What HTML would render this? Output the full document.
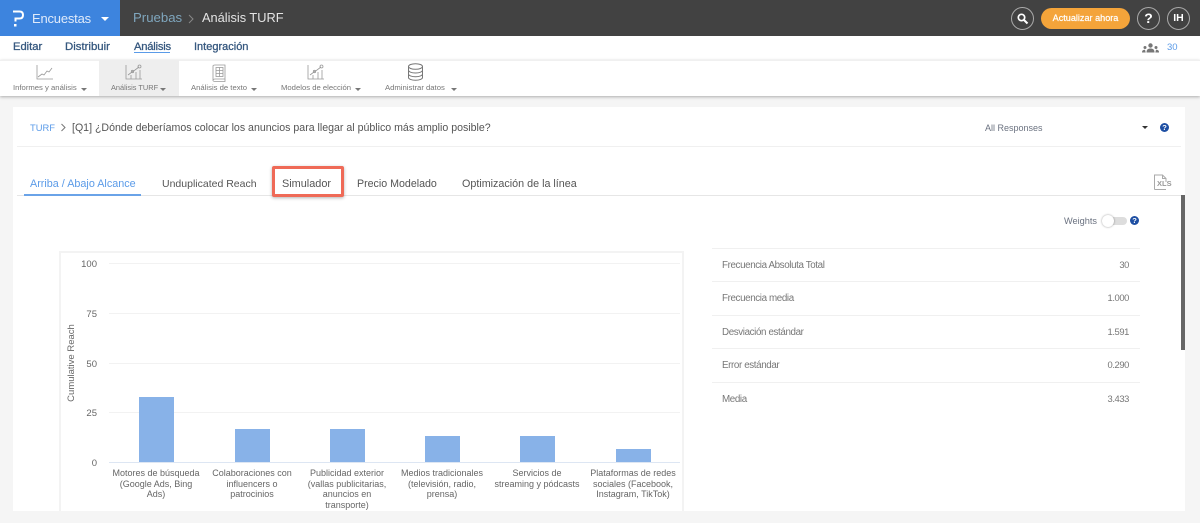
<!DOCTYPE html>
<html lang="es"><head><meta charset="utf-8"><title>Análisis TURF</title>
<style>
html,body{margin:0;padding:0;width:1200px;height:523px;overflow:hidden;background:#f5f5f5;font-family:"Liberation Sans",sans-serif}
.a{position:absolute}
.t{position:absolute;white-space:nowrap;line-height:14px}
.c{position:absolute;text-align:center;font-size:9px;line-height:10.7px;color:#666;width:130px}
.arr{position:absolute;width:0;height:0;border-left:3.5px solid transparent;border-right:3.5px solid transparent;border-top:3.5px solid #777}
.hl{position:absolute;left:712px;width:428px;height:1px;background:#f0f0f0}
.g{position:absolute;left:109px;width:571px;height:1px;background:#f2f2f2}
.b{position:absolute;width:35px;background:#88b2e8}
.stat{position:absolute;font-size:9.8px;letter-spacing:-.38px;color:#777;line-height:14px;white-space:nowrap}
.v{position:absolute;right:71px;font-size:9.4px;letter-spacing:-.4px;color:#777;line-height:14px}
.y{position:absolute;font-size:9.5px;color:#666;line-height:12px;text-align:right;width:30px;left:67px}
.q{position:absolute;width:9px;height:9px;border-radius:50%;background:#1e4fa3;color:#fff;font-size:7.5px;font-weight:bold;line-height:9px;text-align:center}
.cir{position:absolute;top:7px;width:21px;height:21px;border:1px solid #aaa;border-radius:50%;color:#fff;font-weight:bold;text-align:center;line-height:21px}
.n{position:absolute;top:40px;white-space:nowrap;line-height:14px;font-size:11.2px;color:#36587f;-webkit-text-stroke:.3px #36587f}
.m{position:absolute;top:82px;white-space:nowrap;font-size:7.7px;color:#777;line-height:12px}
.tab{position:absolute;top:177px;white-space:nowrap;line-height:14px;font-size:10.65px;color:#555}
</style></head><body>
<!-- top bar -->
<div class="a" style="left:0;top:0;width:1200px;height:36px;background:#424242"></div>
<div class="a" style="left:0;top:0;width:120px;height:36px;background:#3d84de"></div>
<svg class="a" style="left:10px;top:9px" width="16" height="20" viewBox="0 0 16 20"><path d="M3 2.5H9.5C12 2.500 13 4 13 6S12 9.500 9.500 9.500H5.500V12.500" fill="none" stroke="#fff" stroke-width="2"/><rect x="4" y="15" width="2.500" height="2.500" fill="#fff"/></svg>
<div class="t" style="left:32px;top:12px;font-size:13px;letter-spacing:-.2px;color:#dfeafa">Encuestas</div>
<div class="arr" style="left:101px;top:17px;border-left-width:4.5px;border-right-width:4.500px;border-top:4.500px solid #fff"></div>
<div class="t" style="left:133px;top:11px;font-size:13.2px;color:#7fa6bd">Pruebas</div>
<svg class="a" style="left:187px;top:14px" width="8" height="10"><path d="M2 1L6 5L2 9" fill="none" stroke="#888" stroke-width="1"/></svg>
<div class="t" style="left:202px;top:11px;font-size:12.8px;color:#e4e4e4">Análisis TURF</div>
<div class="cir" style="left:1011px">
<svg class="a" style="left:4px;top:4px" width="13" height="13" viewBox="0 0 13 13"><circle cx="5.500" cy="5.500" r="3.200" fill="none" stroke="#fff" stroke-width="1.700"/><path d="M8 8L11.500 11.500" stroke="#fff" stroke-width="2"/></svg></div>
<div class="a" style="left:1041px;top:8px;width:89px;height:21px;background:#f4a43a;border-radius:11px;color:#fff;font-size:9.1px;-webkit-text-stroke:.2px #fff;line-height:21px;text-align:center">Actualizar ahora</div>
<div class="cir" style="left:1137px;font-size:14px">?</div>
<div class="cir" style="left:1167px;font-size:10.500px">IH</div>
<!-- nav -->
<div class="a" style="left:0;top:36px;width:1200px;height:24px;background:#fff"></div>
<div class="n" style="left:13px">Editar</div>
<div class="n" style="left:65px;font-size:11.4px">Distribuir</div>
<div class="n" style="left:134px;letter-spacing:-.2px">Análisis</div>
<div class="a" style="left:134px;top:52px;width:36px;height:1px;background:#5a9be8"></div>
<div class="n" style="left:194px;font-size:11px">Integración</div>
<svg class="a" style="left:1142px;top:43px" width="17" height="10" viewBox="0 0 17 10" fill="#777"><circle cx="8.500" cy="2.500" r="2.200"/><path d="M4.500 9.500C4.500 6.500 6 5.500 8.500 5.500S12.500 6.500 12.500 9.500Z"/><circle cx="3" cy="4.500" r="1.500"/><path d="M0 9.500C0 7.500 1 6.800 3 6.800L3.700 9.500Z"/><circle cx="14" cy="4.500" r="1.500"/><path d="M17 9.500C17 7.500 16 6.800 14 6.800L13.300 9.500Z"/></svg>
<div class="t" style="left:1167px;top:41px;font-size:9.500px;color:#5b9be8">30</div>
<!-- toolbar -->
<div class="a" style="left:0;top:60px;width:1200px;height:36px;background:#fff;border-top:1px solid #f0f0f0;box-sizing:border-box;box-shadow:0 1px 3px rgba(0,0,0,.3)"></div>
<div class="a" style="left:99px;top:60px;width:80px;height:36px;background:#eeeeee"></div>
<svg class="a" style="left:36px;top:64px" width="18" height="16" viewBox="0 0 18 16" fill="none" stroke="#999" stroke-width=".8"><path d="M1 1V15H17"/><path d="M2 13L6 10L8 11L11 7L13 8L16 4"/></svg>
<svg class="a" style="left:125px;top:64px" width="18" height="16" viewBox="0 0 18 16" fill="none" stroke="#999" stroke-width=".8"><path d="M1 1V15H17"/><path d="M3 11L7 8L10 6L14 3"/><circle cx="14.500" cy="2.500" r="1.500"/><circle cx="7.500" cy="7.500" r="1.200"/><path d="M6 15V11M11 15V8M15 15V6"/></svg>
<svg class="a" style="left:211px;top:64px" width="16" height="18" viewBox="0 0 16 18" fill="none" stroke="#999" stroke-width=".8"><path d="M2 2C2 1 3 1 4 1H14V15H4C3 15 2 15.500 2 16.500Z"/><path d="M2 16.500C2 17 3 17.500 4 17.500H14V15"/><rect x="5" y="3.500" width="7" height="9"/><path d="M5 6.500H12M5 9.500H12M8.500 3.500V12.500"/></svg>
<svg class="a" style="left:307px;top:64px" width="18" height="16" viewBox="0 0 18 16" fill="none" stroke="#999" stroke-width=".8"><path d="M1 1V15H17"/><path d="M3 11L7 8L10 6L14 3"/><circle cx="14.500" cy="2.500" r="1.500"/><circle cx="7.500" cy="7.500" r="1.200"/><path d="M6 15V11M11 15V8M15 15V6"/></svg>
<svg class="a" style="left:407px;top:63px" width="17" height="18" viewBox="0 0 17 18" fill="none" stroke="#777" stroke-width="1"><ellipse cx="8.500" cy="3.500" rx="7" ry="2.800"/><path d="M1.500 3.500V14.500C1.500 16 4.500 17.300 8.500 17.300S15.500 16 15.500 14.500V3.500"/><path d="M1.500 7.300C1.500 8.800 4.500 10 8.500 10S15.500 8.800 15.500 7.300M1.500 11C1.500 12.500 4.500 13.700 8.500 13.700S15.500 12.500 15.500 11"/></svg>
<div class="m" style="left:13px">Informes y análisis</div><div class="arr" style="left:81px;top:88px"></div>
<div class="m" style="left:111px;font-size:7.4px">Análisis TURF</div><div class="arr" style="left:160px;top:88px"></div>
<div class="m" style="left:191px">Análisis de texto</div><div class="arr" style="left:251px;top:88px"></div>
<div class="m" style="left:281px">Modelos de elección</div><div class="arr" style="left:355px;top:88px"></div>
<div class="m" style="left:385px">Administrar datos</div><div class="arr" style="left:451px;top:88px"></div>
<!-- card -->
<div class="a" style="left:13px;top:107px;width:1172px;height:404px;background:#fff"></div>
<div class="t" style="left:30px;top:120.5px;font-size:9.4px;color:#5b9be8">TURF</div>
<svg class="a" style="left:60px;top:123px" width="7" height="9"><path d="M1.500 1L5 4.500L1.500 8" fill="none" stroke="#777" stroke-width="1"/></svg>
<div class="t" style="left:72px;top:121px;font-size:10.6px;color:#555">[Q1] ¿Dónde deberíamos colocar los anuncios para llegar al público más amplio posible?</div>
<div class="t" style="left:985px;top:121px;font-size:9px;color:#6b7280">All Responses</div>
<div class="arr" style="left:1142px;top:126px;border-top-color:#333"></div>
<div class="q" style="left:1160px;top:123px">?</div>
<div class="a" style="left:17px;top:146px;width:1164px;height:1px;background:#f0f0f0"></div>
<!-- tabs -->
<div class="tab" style="left:30px;color:#5b9be8;font-size:10.8px">Arriba / Abajo Alcance</div>
<div class="a" style="left:17px;top:195px;width:1164px;height:1px;background:#e6e6e6"></div>
<div class="a" style="left:24px;top:194px;width:117px;height:2px;background:#6aa3e8"></div>
<div class="tab" style="left:162px;font-size:10.5px">Unduplicated Reach</div>
<div class="a" style="left:272px;top:166px;width:72px;height:31px;box-sizing:border-box;border:3.500px solid #ef6a57;border-radius:2px;box-shadow:0 1px 3px rgba(0,0,0,.3);background:#fff"></div>
<div class="tab" style="left:282px;font-size:10.9px">Simulador</div>
<div class="tab" style="left:357px">Precio Modelado</div>
<div class="tab" style="left:462px;font-size:10.75px">Optimización de la línea</div>
<svg class="a" style="left:1153px;top:174px" width="17" height="17" viewBox="0 0 17 17" fill="none" stroke="#aaa" stroke-width="1"><path d="M1.500 15.500V1H9.500L13 4.500V8M1.500 15.500H13"/><path d="M9.500 1V4.500H13"/></svg>
<div class="t" style="left:1157px;top:178px;font-size:7.500px;font-weight:bold;color:#999;line-height:12px">XLS</div>
<div class="a" style="left:1181px;top:195px;width:4px;height:155px;background:#666"></div>
<!-- weights -->
<div class="t" style="left:1064px;top:214px;font-size:9.2px;color:#6b7280">Weights</div>
<div class="a" style="left:1105px;top:217px;width:22px;height:8px;background:#ddd;border-radius:4px"></div>
<div class="a" style="left:1102px;top:215px;width:12px;height:12px;background:#fff;border-radius:50%;box-shadow:0 0 2px rgba(0,0,0,.4)"></div>
<div class="q" style="left:1130px;top:216px">?</div>
<!-- chart -->
<div class="a" style="left:59px;top:251px;width:625px;height:260px;box-sizing:border-box;border:2px solid #f3f3f3;border-bottom:none"></div>
<div class="g" style="top:263px"></div><div class="g" style="top:313px"></div><div class="g" style="top:363px"></div><div class="g" style="top:412px"></div>
<div class="a" style="left:109px;top:462px;width:571px;height:1px;background:#dde6f3"></div>
<div class="y" style="top:259px">100</div><div class="y" style="top:309px">75</div><div class="y" style="top:359px">50</div><div class="y" style="top:408px">25</div><div class="y" style="top:458px">0</div>
<div class="t" style="left:72px;top:363px;font-size:9.500px;color:#666;transform:translate(-50%,-50%) rotate(-90deg)">Cumulative Reach</div>
<div class="b" style="left:139px;top:397px;height:65px"></div>
<div class="b" style="left:235px;top:429px;height:33px"></div>
<div class="b" style="left:330px;top:429px;height:33px"></div>
<div class="b" style="left:425px;top:436px;height:26px"></div>
<div class="b" style="left:520px;top:436px;height:26px"></div>
<div class="b" style="left:616px;top:449px;height:13px"></div>
<div class="c" style="left:91px;top:468px">Motores de búsqueda<br>(Google Ads, Bing<br>Ads)</div>
<div class="c" style="left:187px;top:468px">Colaboraciones con<br>influencers o<br>patrocinios</div>
<div class="c" style="left:282px;top:468px">Publicidad exterior<br>(vallas publicitarias,<br>anuncios en<br>transporte)</div>
<div class="c" style="left:377px;top:468px">Medios tradicionales<br>(televisión, radio,<br>prensa)</div>
<div class="c" style="left:472px;top:468px">Servicios de<br>streaming y pódcasts</div>
<div class="c" style="left:568px;top:468px">Plataformas de redes<br>sociales (Facebook,<br>Instagram, TikTok)</div>
<!-- stats -->
<div class="hl" style="top:248px"></div><div class="hl" style="top:281px"></div><div class="hl" style="top:315px"></div><div class="hl" style="top:348px"></div><div class="hl" style="top:382px"></div>
<div class="stat" style="left:722px;top:259px">Frecuencia Absoluta Total</div><div class="v" style="top:258px">30</div>
<div class="stat" style="left:722px;top:292px">Frecuencia media</div><div class="v" style="top:291px">1.000</div>
<div class="stat" style="left:722px;top:326px">Desviación estándar</div><div class="v" style="top:325px">1.591</div>
<div class="stat" style="left:722px;top:359px">Error estándar</div><div class="v" style="top:358px">0.290</div>
<div class="stat" style="left:722px;top:393px">Media</div><div class="v" style="top:392px">3.433</div>
</body></html>
